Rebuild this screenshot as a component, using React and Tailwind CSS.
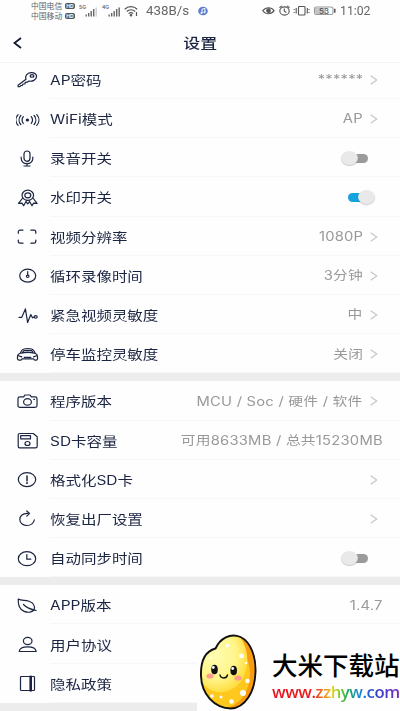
import clsx from 'clsx'

const icons = {
  key: (
    <>
      <path d="M10 9.200C8.700 6.200 11 2.900 15 2.600c3.600-.2 6 1.700 5.500 4.300-.5 3-3.900 4.900-7.600 4.200l-1.700 1.100-1.800.1-.5 1.500-1.900.2-.7 1.500-1.500.2-.9.900-1.700.1-.2-1.400z" />
      <ellipse cx="16" cy="5.900" rx="1.900" ry="1.300" />
    </>
  ),
  wifi: (
    <>
      <path d="M7.300 6.700c-1.500 2-1.500 4.600 0 6.600M4.800 5.500c-2.300 2.600-2.300 6.400 0 9M2.100 4.600c-2.800 3.200-2.800 7.600 0 10.800M15.300 6.700c1.500 2 1.500 4.600 0 6.600M18.100 5.500c2.300 2.600 2.300 6.400 0 9M20.800 4.600c2.800 3.200 2.800 7.600 0 10.800" />
      <ellipse cx="11.400" cy="10" rx="1.100" ry=".9" fill="currentColor" />
    </>
  ),
  mic: (
    <>
      <rect x="8" y="2" width="6" height="10.300" rx="3" />
      <path d="M5.200 8v1.300c0 3.300 2.600 5.300 5.800 5.300s5.800-2 5.800-5.300V8M11 14.600v2.200M8 17h6" />
    </>
  ),
  medal: (
    <>
      <ellipse cx="11.800" cy="7.300" rx="5.800" ry="5.100" />
      <ellipse cx="11.800" cy="7.300" rx="3" ry="2.500" />
      <path d="M6.700 10 2.500 15.300l3.500-.2L7.600 17.700l3-5.200M16.900 10l4.200 5.300-3.500-.2-1.600 2.600-3-5.200M10.200 13.800l1.600 2 1.600-2" />
    </>
  ),
  scan: <path d="M2.300 6.300V4.800c0-1 .7-1.700 1.800-1.700H7M14.800 3.100H18c1.100 0 1.800.7 1.800 1.700v1.500M2.300 13v1.500c0 1 .7 1.700 1.800 1.700H7M14.800 16.200H18c1.100 0 1.800-.7 1.800-1.700V13" />,
  timer: (
    <>
      <ellipse cx="11.700" cy="9.700" rx="8" ry="6.500" />
      <path d="M11.700 5.700v3.500" />
      <ellipse cx="11.700" cy="10.300" rx="1.300" ry="1.200" />
    </>
  ),
  pulse: (
    <>
      <path d="M3 11.300h2.800L9.400 2.900l2.200 13.500 3.200-7.800 1.700 3.200 1.700-.7" />
      <ellipse cx="19.700" cy="10.900" rx="1.500" ry="1.200" />
    </>
  ),
  car: (
    <>
      <path d="M4.200 8.300C5.500 5.300 6.500 4.200 8 4c2.300-.4 5.400-.4 7.500 0 1.500.3 2.600 1.500 3.700 4.300 1.500.7 2.300 1.600 2.300 3.200v2.300c0 .8-.4 1.300-1.400 1.300h-1.400l-1.200-1.200H6.100l-1.200 1.200H3.200c-1 0-1.700-.5-1.700-1.300v-2.300c0-1.600.9-2.500 2.700-3.200z" />
      <path d="M5 8.200c4-.9 9.500-.9 13.500 0M6.500 7.500l1.400-1.900h7.800l1.200 1.900M2.500 10.700l3.300 1.200M20.700 10.700l-3.200 1.200M8.300 12.400h6.500" />
    </>
  ),
  camera: (
    <>
      <path d="M4 4.900h3.700l1.200-1.900h5.200l1.200 1.900H19c1.300 0 2 .6 2 1.500v7.400c0 .9-.7 1.500-2 1.500H4c-1.300 0-2-.6-2-1.500V6.400c0-.9.700-1.500 2-1.500z" />
      <ellipse cx="11.500" cy="9.900" rx="3.900" ry="3.200" />
      <path d="M17.900 7.400h.6" />
    </>
  ),
  disk: (
    <>
      <path d="M3.700 2.500h13.500l4 3.200v9.500c0 1-.6 1.600-1.700 1.600H3.700c-1 0-1.500-.6-1.500-1.600V4.100c0-1 .5-1.600 1.500-1.600zM4.700 4.700h9.800v3.200H4.700z" />
      <ellipse cx="11.500" cy="12.500" rx="2.500" ry="2" />
    </>
  ),
  alert: (
    <>
      <ellipse cx="11" cy="9.600" rx="8.700" ry="7" />
      <path d="M11 6v4.700M11 12.500v.9" strokeWidth="1.500" />
    </>
  ),
  reset: (
    <>
      <path d="M12 4.300h-1c-4 0-7.200 2.700-7.200 6.100s3.200 6.100 7.200 6.100c3.800 0 7-2.500 7.300-5.700" />
      <path d="m10.800 2 2.700 2.400-2.700 2.800" />
    </>
  ),
  clock: (
    <>
      <ellipse cx="11" cy="9.700" rx="8.700" ry="7" />
      <path d="M10.800 5.500v4.700h4" />
    </>
  ),
  leaf: (
    <>
      <path d="M2.200 3c3 1.900 6.700.9 10.700 2.200 4.300 1.500 6.300 4.800 5.300 8.500-1.500 2.300-6 3.400-10 1.700C2.700 13 2.200 8.300 2.200 3z" />
      <path d="M7.500 8.500c3 3.300 7 4.900 12.700 6" />
    </>
  ),
  user: (
    <>
      <ellipse cx="11.700" cy="6" rx="4.300" ry="3.600" />
      <path d="M3.200 16.500c.3-3.100 3.900-4.700 8.500-4.700s8.200 1.600 8.500 4.700z" />
    </>
  ),
  book: (
    <>
      <rect x="4.500" y="2.500" width="14" height="14" rx=".8" />
      <path d="M14.700 2.700v13.700" strokeWidth="2.600" />
    </>
  ),
}

const groups = [
  [
    { icon: 'key', label: 'AP密码', value: '******', arrow: true },
    { icon: 'wifi', label: 'WiFi模式', value: 'AP', arrow: true },
    { icon: 'mic', label: '录音开关', toggle: 'off' },
    { icon: 'medal', label: '水印开关', toggle: 'on' },
    { icon: 'scan', label: '视频分辨率', value: '1080P', arrow: true },
    { icon: 'timer', label: '循环录像时间', value: '3分钟', arrow: true },
    { icon: 'pulse', label: '紧急视频灵敏度', value: '中', arrow: true },
    { icon: 'car', label: '停车监控灵敏度', value: '关闭', arrow: true },
  ],
  [
    { icon: 'camera', label: '程序版本', value: 'MCU / Soc / 硬件 / 软件', arrow: true },
    { icon: 'disk', label: 'SD卡容量', value: '可用8633MB / 总共15230MB' },
    { icon: 'alert', label: '格式化SD卡', arrow: true },
    { icon: 'reset', label: '恢复出厂设置', arrow: true },
    { icon: 'clock', label: '自动同步时间', toggle: 'off' },
  ],
  [
    { icon: 'leaf', label: 'APP版本', value: '1.4.7' },
    { icon: 'user', label: '用户协议' },
    { icon: 'book', label: '隐私政策' },
  ],
]

function Signal({ label }) {
  return (
    <svg width="18" height="14" viewBox="0 0 18 14" className="shrink-0">
      <text x="0" y="4.500" fontSize="5" fontWeight="600" fill="#666">{label}</text>
      <path d="M7.200 12.500v-2M9.700 12.500V9M12.200 12.500V7" stroke="#666" strokeWidth="1.400" />
      <path d="M14.700 12.500V5" stroke="#666" strokeWidth="1.400" />
      <path d="M17.200 12.500V3.500" stroke={label === '5G' ? '#ccc' : '#666'} strokeWidth="1.400" />
    </svg>
  )
}

function Carrier({ name }) {
  return (
    <div className="flex h-[10px] items-center">
      <span className="w-[34px] text-[7.800px] leading-[10px] whitespace-nowrap text-[#666]">{name}</span>
      <span className="flex h-[6px] w-[10px] items-center justify-center rounded-[2px] bg-[#555] text-[5px] leading-none font-bold text-white">HD</span>
    </div>
  )
}

function StatusBar() {
  return (
    <div className="flex h-[22px] shrink-0 items-center pl-[31px] text-[#555]">
      <div className="w-12">
        <Carrier name="中国电信" />
        <Carrier name="中国移动" />
      </div>
      <Signal label="5G" />
      <div className="w-[5px]" />
      <Signal label="4G" />
      <svg width="14" height="12" viewBox="0 0 14 12" fill="none" stroke="#555" strokeWidth="1.200" className="ml-1 shrink-0">
        <path d="M.7 4.200c3.500-3.400 9-3.400 12.500 0M2.700 6.500c2.500-2.300 6-2.300 8.500 0M4.600 8.600c1.400-1.200 3.200-1.200 4.600 0" />
        <circle cx="7" cy="10.300" r=".7" fill="#555" />
        <path d="M12.500 7v4" />
      </svg>
      <span className="ml-[8px] w-[52px] shrink-0 origin-left scale-x-[1.110] font-[Roboto,sans-serif] text-[12px] leading-none text-[#666]">438B/s</span>
      <svg width="10" height="10" viewBox="0 0 10 10" className="shrink-0">
        <ellipse cx="5" cy="5" rx="4.800" ry="4.300" fill="#5a7bd0" />
        <path d="M4 7V3.200l3-.7V6" fill="none" stroke="#fff" />
        <circle cx="3.500" cy="7" r="1" fill="#fff" />
        <circle cx="6.500" cy="6.200" r="1" fill="#fff" />
      </svg>
      <svg width="74" height="14" viewBox="0 0 74 14" fill="none" stroke="#555" strokeWidth="1.100" className="ml-[54px] shrink-0">
        <path d="M.8 6.700c3-4 8.500-4 11.400 0-3 4-8.500 4-11.400 0z" />
        <circle cx="6.500" cy="6.700" r="1.800" fill="#555" />
        <ellipse cx="22.500" cy="7" rx="4.700" ry="4.100" />
        <path d="M22.300 4.600v2.700l2 1.200M17.500 3.700l2.300-1.800M27.500 3.700l-2.300-1.800" />
        <rect x="36.500" y="2.500" width="6.500" height="8.500" rx=".7" />
        <path d="M34.200 4v5.500M45.300 4v5.500M32.200 5v1M32.200 8v1M47 5v1M47 8v1" />
        <rect x="52.500" y="3" width="18.500" height="7.500" rx="1.800" stroke="#999" fill="#fff" />
        <rect x="53" y="3.500" width="11" height="6.500" rx="1" fill="#c4c4c4" stroke="none" />
        <path d="M72.800 4.800v4" strokeWidth="1.500" />
        <text x="57" y="9.600" fontSize="8" fontWeight="500" fill="#555" stroke="none">53</text>
      </svg>
      <span className="ml-1 origin-left scale-x-[1.020] font-[Roboto,sans-serif] text-[12px] leading-none text-[#666]">11:02</span>
    </div>
  )
}

function Toggle({ on }) {
  return (
    <div className={clsx('flex h-[15px] w-[27px] items-center', on ? 'mr-[25.500px] justify-end' : 'mr-[32px]')}>
      <div className={clsx('h-[9px] w-[20px] shrink-0 rounded-full', on ? 'bg-[#14a3dc]' : 'order-2 -ml-[10px] bg-[#9b9b9b]')} />
      <div className={clsx('z-10 h-[14px] w-[17px] shrink-0 rounded-[50%] bg-[#e9e9e9] shadow-[0_1px_1px_rgba(0,0,0,0.2)]', on && '-ml-[10px]')} />
    </div>
  )
}

function Row({ icon, label, value, arrow, toggle }) {
  return (
    <div className="flex h-[39.200px] items-center">
      <svg width="24" height="20" viewBox="0 0 24 20" fill="none" stroke="currentColor" strokeWidth="1.200" strokeLinecap="round" strokeLinejoin="round" className="mt-[2px] ml-4 shrink-0 text-[#1b2440]">
        {icons[icon]}
      </svg>
      <div className="ml-[10px] flex h-full flex-1 items-center border-b border-[#f7f7f7] pt-[2px]">
        <span className="mt-px origin-left scale-x-[1.190] text-[13px] leading-none whitespace-nowrap text-[#1b2440]">{label}</span>
        <div className="flex-1" />
        {value && (
          <span className={clsx('mt-px origin-right scale-x-[1.190] text-[12.400px] leading-none tracking-[0.200px] whitespace-nowrap text-[#999]', arrow ? 'mr-[7px]' : 'mr-[17px]')}>{value}</span>
        )}
        {arrow && (
          <svg width="8" height="10" viewBox="0 0 8 10" fill="none" stroke="#c8c8c8" strokeWidth="1.300" className="mr-[22px] shrink-0">
            <path d="m.7.700 6 4.300-6 4.300" />
          </svg>
        )}
        {toggle && <Toggle on={toggle === 'on'} />}
      </div>
    </div>
  )
}

function Watermark() {
  return (
    <div className="absolute right-0 bottom-0 flex h-[79px] w-[203px] bg-[#fefefe]">
      <svg width="62" height="79" viewBox="0 0 62 79" className="shrink-0">
        <defs>
          <radialGradient id="rice" cx="38%" cy="38%" r="62%">
            <stop offset="0" stopColor="#fffdb0" />
            <stop offset=".65" stopColor="#fff58a" />
            <stop offset="1" stopColor="#ffdf45" />
          </radialGradient>
          <clipPath id="grain">
            <path d="M18.500 16.500C23 6.500 33 .5 43.500 5 54 10 59 25 58.500 40 58 60 48 76 34 76.500 17 76 4.500 62 4 44 3.500 28 9 19 18.500 16.500z" />
          </clipPath>
        </defs>
        <g clipPath="url(#grain)">
          <rect width="62" height="79" fill="#f99b12" />
          <ellipse cx="26" cy="42" rx="27" ry="34" fill="#ffc81e" />
          <path d="M0 0h39c12 12 14 30 8 44-6 13-20 19-31 15C8 56 4 50 0 44z" fill="url(#rice)" />
        </g>
        <path d="M18.500 16.500C23 6.500 33 .5 43.500 5 54 10 59 25 58.500 40 58 60 48 76 34 76.500 17 76 4.500 62 4 44 3.500 28 9 19 18.500 16.500z" fill="none" stroke="#111" strokeWidth="1.900" />
        <g fill="#111">
          <ellipse cx="17.500" cy="37.500" rx="3.300" ry="4.700" />
          <ellipse cx="36.700" cy="38.500" rx="3.300" ry="4.700" />
        </g>
        <g fill="#fff">
          <circle cx="16.300" cy="35.500" r="1.400" />
          <circle cx="35.700" cy="36.500" r="1.400" />
          <circle cx="30.500" cy="13.500" r="1.800" />
          <circle cx="44.500" cy="24" r="2.400" />
          <circle cx="49" cy="31" r="1.300" />
          <circle cx="50.500" cy="49" r="2.200" />
          <circle cx="46" cy="61" r="3" />
          <circle cx="34.500" cy="69.500" r="2.300" />
          <circle cx="24" cy="65" r="1.500" />
          <circle cx="15" cy="64" r="1.800" />
          <circle cx="14" cy="26" r="1.200" />
        </g>
        <path d="M23 43c.7 4 6.500 4 7.500 0" fill="none" stroke="#111" strokeWidth="1.400" strokeLinecap="round" />
        <ellipse cx="13" cy="44" rx="3.600" ry="2.600" fill="#ff9c8c" />
        <ellipse cx="41" cy="46" rx="3.600" ry="2.600" fill="#ff9c8c" />
      </svg>
      <div className="flex flex-col items-start pt-[19px] pl-[13px]">
        <span className="text-[25.500px] leading-[30px] font-medium whitespace-nowrap text-black">大米下载站</span>
        <span className="bg-[linear-gradient(90deg,#ea1020_0%,#ea1a1a_32%,#f07d18_40%,#e6d321_47%,#7ecb25_53%,#18a956_59%,#1686d9_68%,#2b43c9_80%,#7a2bc0_100%)] bg-clip-text font-['Open_Sans',sans-serif] text-[16.700px] leading-[21px] font-semibold tracking-[-0.450px] text-transparent">www.zzhyw.com</span>
      </div>
    </div>
  )
}

export default function App() {
  return (
    <div className="relative flex h-[711px] w-[400px] flex-col overflow-hidden bg-[#fefefe] font-[Inter,'Noto_Sans_CJK_SC',sans-serif]">
      <StatusBar />
      <header className="flex h-[41px] shrink-0 items-center border-b border-[#f3f3f3]">
        <svg width="10" height="12" viewBox="0 0 10 12" fill="none" stroke="#111a33" strokeWidth="1.800" className="mt-px ml-[13px]">
          <path d="M8 1 1.500 6 8 11" />
        </svg>
        <h1 className="mt-px flex-1 scale-x-[1.190] pr-[19px] text-center text-[14.200px] font-medium text-[#1b2440]">设置</h1>
      </header>
      <main className="-mt-[3.200px]">
        {groups.map((rows, i) => (
          <section key={i} className="border-b-8 border-[#ececec]">
            {rows.map((row) => (
              <Row key={row.label} {...row} />
            ))}
          </section>
        ))}
      </main>
      <Watermark />
    </div>
  )
}
